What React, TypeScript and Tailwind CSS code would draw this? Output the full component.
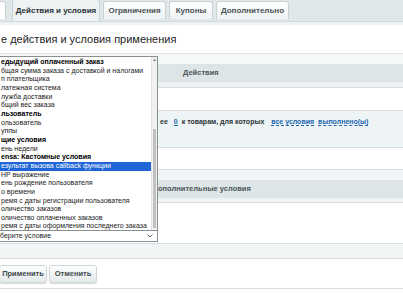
import React from 'react';

const items: { text: string; bold?: boolean; selected?: boolean }[] = [
  { text: 'едыдущий оплаченный заказ', bold: true },
  { text: 'бщая сумма заказа с доставкой и налогами' },
  { text: 'п плательщика' },
  { text: 'латежная система' },
  { text: 'лужба доставки' },
  { text: 'бщий вес заказа' },
  { text: 'льзователь', bold: true },
  { text: 'ользователь' },
  { text: 'уппы' },
  { text: 'щие условия', bold: true },
  { text: 'ень недели' },
  { text: 'ensa: Кастомные условия', bold: true },
  { text: 'езультат вызова callback функции', selected: true },
  { text: 'HP выражение' },
  { text: 'ень рождение пользователя' },
  { text: 'о времени' },
  { text: 'ремя с даты регистрации пользователя' },
  { text: 'оличество заказов' },
  { text: 'оличество оплаченных заказов' },
  { text: 'ремя с даты оформления последнего заказа' },
];

const Tab = ({ label, active, w }: { label: string; active?: boolean; w: string }) => (
  <div
    className={`${w} flex items-center justify-center rounded-t-[3px] border border-b-0 border-[#c9d2d5] text-[8px] font-bold ${
      active ? 'h-[22px] bg-[#eef2f3] text-[#2b3437]' : 'h-[18px] mb-[2px] bg-gradient-to-b from-white to-[#eef2f3] text-[#4a5356]'
    }`}
  >
    {label}
  </div>
);

const Link = ({ children }: { children: React.ReactNode }) => (
  <span className="text-[#2067b0] border-b border-dashed border-[#2067b0]">{children}</span>
);

export default function App() {
  return (
    <div className="relative w-[403px] h-[294px] overflow-hidden bg-white" style={{ fontFamily: '"Liberation Sans", Arial, sans-serif' }}>
      {/* tabs */}
      <div className="h-[22px] bg-[#dfe7e9] flex items-end gap-[3px] border-b border-[#cfd8db]">
        <div className="w-[6px] h-[18px] mb-[2px] bg-white border border-l-0 border-b-0 border-[#c9d2d5] rounded-tr-[3px]" />
        <div className="w-[0px]" />
        <Tab label="Действия и условия" active w="w-[88px]" />
        <Tab label="Ограничения" w="w-[63px]" />
        <Tab label="Купоны" w="w-[44px]" />
        <Tab label="Дополнительно" w="w-[73px]" />
      </div>
      <div className="h-[3px] bg-[#eef2f3]" />

      {/* title */}
      <div className="h-[28px] flex items-center text-[11px] text-[#1d2326] pl-[1px]">е действия и условия применения</div>

      {/* panel */}
      <div className="border-t border-[#dce3e5] bg-[#f5f8f9]">
        <div className="h-[10px]" />
        <div className="h-[18px] bg-[#dde5e7] flex items-center pl-[183px] text-[7.5px] font-bold text-[#4b565a]">Действия</div>
        <div className="h-[6px] bg-[#eef2f3] border-b border-[#d6dee1]" />
        <div className="h-[22px] bg-white" />
        <div className="h-[38px] bg-[#eef3f5] border-t border-b border-[#d6dee1] flex items-start text-[7px] font-bold text-[#2b3437] pl-[160px] pt-[6px]">
          <span>ее</span>
          <span className="ml-[6px]"><Link>0</Link></span>
          <span className="ml-[4px]">к товарам, для которых</span>
          <span className="ml-[7px]"><Link>все условия</Link></span>
          <span className="ml-[4px]"><Link>выполнено(ы)</Link></span>
        </div>
        <div className="h-[22px] bg-white border-b border-[#d6dee1]" />
        <div className="h-[10px] bg-[#f1f5f6]" />
        <div className="h-[18px] bg-[#dde5e7] flex items-center pl-[158px] text-[7.5px] font-bold text-[#4b565a]">ополнительные условия</div>
        <div className="h-[5px] bg-[#eef2f3] border-b border-[#d6dee1]" />
        <div className="h-[40px] bg-white" />
        <div className="h-[16px] bg-[#f1f5f6] border-t border-b border-[#d6dee1]" />
        <div className="h-[30px] bg-white border-b border-[#d6dee1] flex items-center gap-[2px]">
          <button className="h-[18px] w-[48px] -ml-[1px] rounded-[3px] border border-[#cfd6d9] bg-gradient-to-b from-white to-[#e3e9eb] shadow-[0_1px_1px_rgba(0,0,0,0.15)] text-[7.5px] font-bold text-[#3f4a4d]">Применить</button>
          <button className="h-[18px] w-[48px] rounded-[3px] border border-[#cfd6d9] bg-gradient-to-b from-white to-[#e3e9eb] shadow-[0_1px_1px_rgba(0,0,0,0.15)] text-[7.5px] font-bold text-[#3f4a4d]">Отменить</button>
        </div>
      </div>

      {/* open select */}
      <div className="absolute left-0 top-[56px] w-[158px]">
        <div className="h-[175px] bg-white border border-l-0 border-[#8a8f92] flex">
          <div className="flex-1 pt-[1px] overflow-hidden">
            {items.map((it) => (
              <div
                key={it.text}
                className={`h-[8.66px] leading-[8.66px] text-[7px] whitespace-nowrap pl-[1px] ${it.bold ? 'font-bold text-black' : 'text-[#222]'} ${
                  it.selected ? 'bg-[#1f65d6] text-white' : ''
                }`}
              >
                {it.text}
              </div>
            ))}
          </div>
          <div className="w-[6px] bg-[#f1f1f1] border-l border-[#e2e2e2] flex flex-col">
            <div className="h-[6px] flex items-center justify-center text-[4px] text-[#666]">▲</div>
            <div className="h-[66px]" />
            <div className="flex-1 bg-[#c1c1c1] mx-[1px] mb-[2px]" />
          </div>
        </div>
        <div className="h-[11px] bg-white border border-l-0 border-t-0 border-[#8a8f92] flex items-center justify-between pr-[4px] text-[7px] text-[#222]">
          <span>берите условие</span>
          <svg width="6" height="4" viewBox="0 0 6 4"><path d="M0.5 0.5 L3 3 L5.5 0.5" stroke="#555" fill="none" strokeWidth="0.9" /></svg>
        </div>
      </div>
    </div>
  );
}
